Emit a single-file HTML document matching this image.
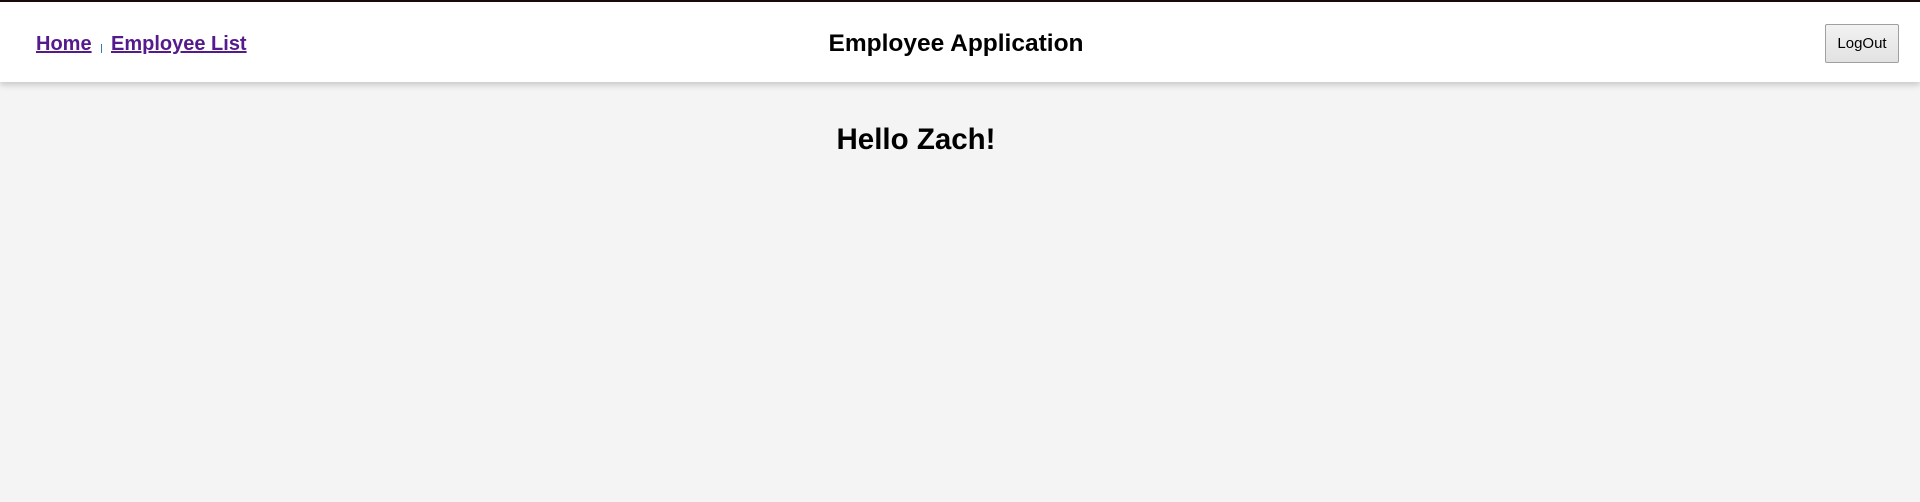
<!DOCTYPE html>
<html><head><style>
body{margin:0;width:1920px;height:502px;background:#f4f4f4;font-family:"Liberation Sans",Arial,sans-serif;position:relative;overflow:hidden}
.hdr{position:absolute;left:0;top:0;width:1920px;height:82px;background:#fff;border-top:2px solid #1a0a0a;box-sizing:border-box;box-shadow:0 3px 6px rgba(0,0,0,0.18)}
a{color:#551a8b;font-weight:bold;font-size:20px;position:absolute;top:31px}
.sep{position:absolute;left:101px;top:42px;width:1px;height:9px;background:#3a7ab0}
.title{position:absolute;left:0;width:1912px;text-align:center;top:28px;font-size:24.5px;font-weight:bold}
.btn{position:absolute;left:1825px;top:22px;width:74px;height:39px;box-sizing:border-box;border:1px solid #a0a0a0;background:linear-gradient(#f2f2f2,#e2e2e2);font-size:15px;text-align:center;line-height:37px;border-radius:2px}
h1{position:absolute;left:816px;width:200px;text-align:center;top:123px;margin:0;font-size:29.5px;font-weight:bold}
</style></head><body>
<div class="hdr">
<a href="#" style="left:36px">Home</a><div class="sep"></div><a href="#" style="left:111px">Employee List</a>
<div class="title">Employee Application</div>
<div class="btn">LogOut</div>
</div>
<h1>Hello Zach!</h1>
</body></html>
